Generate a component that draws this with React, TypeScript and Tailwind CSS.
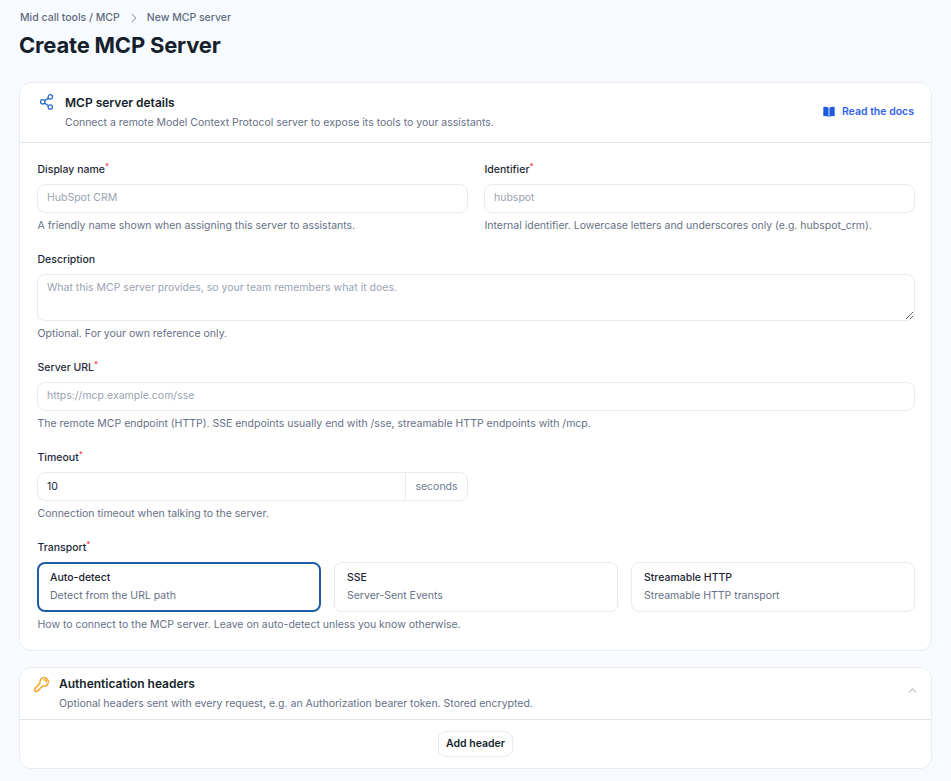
import React from 'react';
import { HiBookOpen, HiChevronRight, HiChevronUp } from 'react-icons/hi2';

function Label({ text, required = true }: { text: string; required?: boolean }) {
  return (
    <label className="block h-4 pl-[0.5px] text-[10.5px] leading-[18px] font-medium text-[#1f2937]">
      {text}
      {required && <sup className="text-[8px] text-red-500 top-[-4px] leading-none">*</sup>}
    </label>
  );
}

function Help({ children }: { children: React.ReactNode }) {
  return <p className="mt-[5px] h-[14px] pl-[0.5px] text-[10.5px] leading-[16px] text-[#667085]">{children}</p>;
}

const inputClass =
  'block w-full h-[29px] rounded-lg border border-[#e9ebf0] bg-white px-[9px] pb-[2px] text-[10.5px] text-[#1c2434] placeholder:text-[#9aa3b2] outline-none';

function Field({ label, placeholder, help }: { label: string; placeholder: string; help: string }) {
  return (
    <div>
      <Label text={label} />
      <input className={`${inputClass} mt-[7px]`} placeholder={placeholder} />
      <Help>{help}</Help>
    </div>
  );
}

function ShareIcon() {
  return (
    <svg viewBox="0 0 16 16" className="w-4 h-4 mt-[-2px] text-[#2f6ec9]" fill="none" stroke="currentColor" strokeWidth="1.3">
      <circle cx="3.7" cy="7.8" r="2.2" />
      <circle cx="11.3" cy="2.9" r="2.2" />
      <circle cx="11.3" cy="13" r="2.2" />
      <path d="M5.6 6.6 9.4 4.1M5.6 9.1l3.8 2.6" />
    </svg>
  );
}

function KeyIcon() {
  return (
    <svg viewBox="0 0 24 24" className="w-[17px] h-[17px] text-[#f8a01c]" fill="none" stroke="currentColor" strokeWidth="2" strokeLinecap="round" strokeLinejoin="round">
      <path d="M15.75 5.25a3 3 0 0 1 3 3" />
      <path d="M21.75 8.25a6 6 0 0 1-7.03 5.91c-.56-.1-1.16.03-1.56.43L7 20.75a2.5 2.5 0 0 1-1.8.75H3.5a1 1 0 0 1-1-1v-1.7c0-.66.26-1.3.73-1.77l6.18-6.12c.4-.4.53-1 .43-1.56A6 6 0 1 1 21.75 8.25Z" />
    </svg>
  );
}

const transports = [
  { name: 'Auto-detect', desc: 'Detect from the URL path', selected: true },
  { name: 'SSE', desc: 'Server-Sent Events', selected: false },
  { name: 'Streamable HTTP', desc: 'Streamable HTTP transport', selected: false },
];

export default function App() {
  return (
    <div className="min-h-[781px] bg-[#f7faff] px-[19px] pt-[11px] pb-3 font-['Inter',sans-serif] overflow-hidden">
      <nav className="flex items-center h-[14px] text-[10.5px] leading-[14px] text-[#5f6b7c] font-medium">
        <span className="ml-px">Mid call tools / MCP</span>
        <HiChevronRight className="ml-[8px] mr-[7px] w-3 h-3 text-[#7a8597]" />
        <span>New MCP server</span>
      </nav>
      <h1 className="mt-[5px] h-[30px] text-[22px] leading-[30px] font-bold tracking-[-0.2px] text-[#161f2c]">Create MCP Server</h1>

      <section className="mt-[22px] rounded-xl border border-[#eaecf1] bg-white">
        <header className="flex items-center justify-between h-[60px] pl-[19px] pr-[17px] border-b border-[#e2e4ec]">
          <div className="flex items-start">
            <ShareIcon />
            <div className="ml-[10px] mt-[-1px]">
              <h2 className="text-[12px] leading-4 font-semibold text-[#161f2c]">MCP server details</h2>
              <p className="mt-[5px] text-[10.5px] leading-[14px] text-[#667085]">Connect a remote Model Context Protocol server to expose its tools to your assistants.</p>
            </div>
          </div>
          <a className="flex items-center gap-[6px] mt-[-1px] text-[10.5px] font-semibold text-[#2f62ea]">
            <HiBookOpen className="w-[14px] h-[14px] text-[#1d5ae0]" />
            Read the docs
          </a>
        </header>

        <div className="pl-[17px] pr-[16px] pt-[18px] pb-[19px]">
          <div className="grid grid-cols-2 gap-x-4">
            <Field label="Display name" placeholder="HubSpot CRM" help="A friendly name shown when assigning this server to assistants." />
            <Field label="Identifier" placeholder="hubspot" help="Internal identifier. Lowercase letters and underscores only (e.g. hubspot_crm)." />
          </div>

          <div className="mt-[19px]">
            <Label text="Description" required={false} />
            <textarea
              className="block mt-[7px] w-full h-[47px] rounded-lg border border-[#e9ebf0] bg-white px-[9px] pt-[6px] pb-[4px] text-[10.5px] leading-[14px] placeholder:text-[#9aa3b2] outline-none"
              placeholder="What this MCP server provides, so your team remembers what it does."
            />
            <Help>Optional. For your own reference only.</Help>
          </div>

          <div className="mt-[19px]">
            <Field label="Server URL" placeholder="https://mcp.example.com/sse" help="The remote MCP endpoint (HTTP). SSE endpoints usually end with /sse, streamable HTTP endpoints with /mcp." />
          </div>

          <div className="mt-[19px]">
            <Label text="Timeout" />
            <div className="mt-[7px] flex w-[431px] h-[29px] rounded-lg border border-[#e9ebf0] bg-white">
              <input className="flex-1 min-w-0 px-[9px] text-[10.5px] text-[#1c2434] outline-none bg-transparent" defaultValue="10" />
              <span className="flex items-center w-[62px] justify-center border-l border-[#e9ebf0] text-[10.5px] text-[#6b7a90]">seconds</span>
            </div>
            <Help>Connection timeout when talking to the server.</Help>
          </div>

          <div className="mt-[19px]">
            <Label text="Transport" />
            <div className="mt-[7px] grid grid-cols-3 gap-[13px]">
              {transports.map(t => (
                <div
                  key={t.name}
                  className={
                    t.selected
                      ? 'h-[50px] rounded-lg border-2 border-[#1f5ba6] bg-white pl-[11px] pt-[6px]'
                      : 'h-[50px] rounded-lg border border-[#e9ebf0] bg-white pl-[12px] pt-[7px]'
                  }
                >
                  <div className="text-[10.5px] leading-4 font-medium text-[#1c2434]">{t.name}</div>
                  <div className="mt-[2px] text-[10.5px] leading-4 text-[#667085]">{t.desc}</div>
                </div>
              ))}
            </div>
            <Help>How to connect to the MCP server. Leave on auto-detect unless you know otherwise.</Help>
          </div>
        </div>
      </section>

      <section className="mt-[16px] rounded-xl border border-[#eaecf1] bg-white">
        <header className="relative h-[52px] pl-[13px] pr-[13px] border-b border-[#e2e4ec] flex items-start pt-[8px]">
          <KeyIcon />
          <div className="ml-[9px]">
            <h2 className="text-[12px] leading-4 font-semibold text-[#161f2c]">Authentication headers</h2>
            <p className="mt-[5px] text-[10.5px] leading-[14px] text-[#667085]">Optional headers sent with every request, e.g. an Authorization bearer token. Stored encrypted.</p>
          </div>
          <HiChevronUp className="ml-auto mt-[9px] w-[11px] h-[11px] text-[#9aa3b8]" />
        </header>
        <div className="flex justify-center pt-[11px] pb-[11px]">
          <button className="h-[26px] w-[75px] rounded-lg border border-[#e9ebf0] bg-white text-[10.5px] font-semibold text-[#161f2c]">Add header</button>
        </div>
      </section>
    </div>
  );
}
